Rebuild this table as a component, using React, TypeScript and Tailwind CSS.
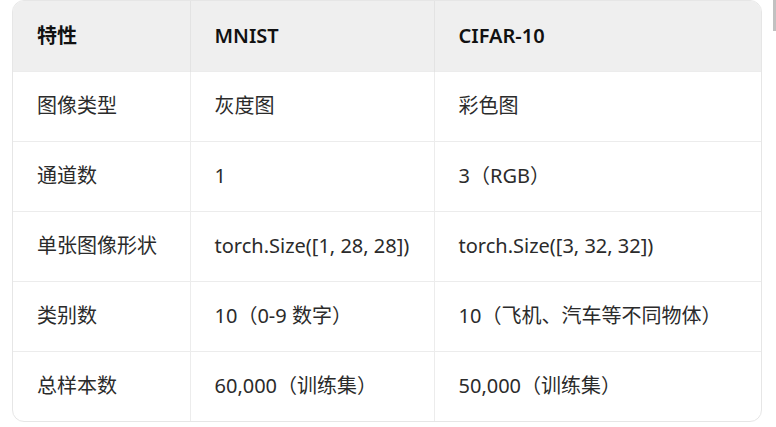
const rows = [
  ["图像类型", "灰度图", "彩色图"],
  ["通道数", "1", "3（RGB）"],
  ["单张图像形状", "torch.Size([1, 28, 28])", "torch.Size([3, 32, 32])"],
  ["类别数", "10（0-9 数字）", "10（飞机、汽车等不同物体）"],
  ["总样本数", "60,000（训练集）", "50,000（训练集）"],
];

export default function App() {
  return (
    <div
      className="relative w-[776px] h-[427px] bg-white text-[20px] text-[#2b2b2b]"
      style={{ fontFamily: '"Noto Sans", "Noto Sans CJK SC", sans-serif' }}
    >
      <div className="pl-3 pr-[14px]">
        <div className="overflow-hidden rounded-xl border border-[#e6e6e6]">
          <table className="w-full border-collapse table-fixed">
            <colgroup>
              <col className="w-[177px]" />
              <col className="w-[244px]" />
              <col />
            </colgroup>
            <thead>
              <tr className="h-[70px] bg-[#efefef] text-[#111]">
                <th className="pl-6 text-left font-semibold">特性</th>
                <th className="pl-6 text-left font-semibold border-l border-[#e3e3e3]">MNIST</th>
                <th className="pl-6 text-left font-semibold border-l border-[#e3e3e3]">CIFAR-10</th>
              </tr>
            </thead>
            <tbody>
              {rows.map((r, i) => (
                <tr key={i} className="h-[70px] border-t border-[#ececec]">
                  <td className="pl-6">{r[0]}</td>
                  <td className="pl-6 border-l border-[#ececec]">{r[1]}</td>
                  <td className="pl-6 border-l border-[#ececec]">{r[2]}</td>
                </tr>
              ))}
            </tbody>
          </table>
        </div>
      </div>
      <div className="absolute right-0 top-0 w-[3px] h-[31px] bg-[#c1c1c1]" />
    </div>
  );
}
